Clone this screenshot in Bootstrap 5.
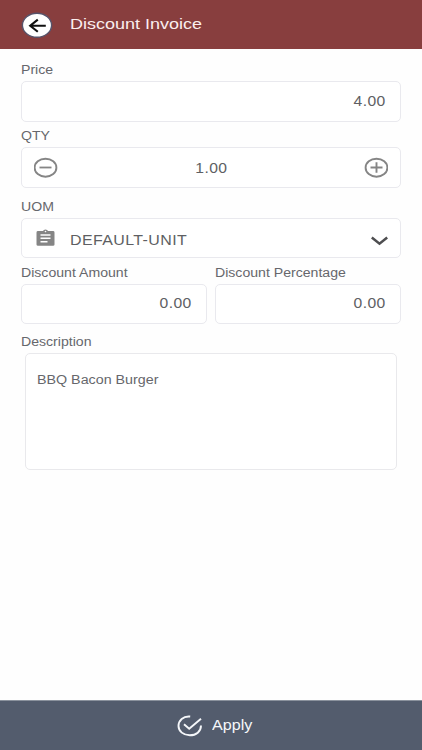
<!DOCTYPE html>
<html lang="en">
<head>
<meta charset="utf-8">
<meta name="viewport" content="width=device-width, initial-scale=1">
<title>Discount Invoice</title>
<link href="https://cdn.jsdelivr.net/npm/bootstrap@5.3.0/dist/css/bootstrap.min.css" rel="stylesheet">
<style>
body{font-family:"Liberation Sans",Arial,sans-serif;background:#fefefe;color:#66676c;font-size:12px;line-height:14px;height:750px;overflow:hidden}
.topbar{height:49px;background:#883e3e;color:#fbeeee;padding-left:21px}
.topbar .title{font-size:15.5px;line-height:20px;margin:0 0 1px 17px;--sx:1.16}
.wide{display:inline-block;white-space:nowrap;transform:scaleX(var(--sx,1.175));transform-origin:left center}
.wide-end{transform-origin:right center}
.wide-mid{transform-origin:center}
.form-area{padding:14px 21px 0}
.cap-label{display:block;height:18px}
.field{height:41px;border:1px solid #e9e9ee;border-radius:5px;background:#fff;font-size:14px;letter-spacing:.35px;line-height:18px;color:#5e5f63;--sx:1.12}
.field.low{height:40px}
.field-num{padding:0 14px 2px}
.note{height:117px;margin:0 4px;border:1px solid #e9e9ec;border-radius:5px;background:#fff;padding:19px 11px;--sx:1.19}
.gap-qty{margin-top:7px}
.gap-uom{margin-top:12px}
.gap-disc{margin-top:8px}
.gap-desc{margin-top:11px}
.pair{display:grid;grid-template-columns:186px 186px;column-gap:8px}
.unit-icon{margin-left:14px}
.unit-text{margin:3px 0 0 15px;--sx:1.14}
.unit-arrow{margin:6px 12px 0 auto}
.footbar{height:50px;background:#535c6d;color:#f5f7fa;font-size:14px;line-height:18px;border:0;border-radius:0;border-top:1px solid #8b929d;padding:0 0 0 177px;--sx:1.15}
.footbar .wide{margin:0 0 1px 9px}
svg{display:block;flex:none}
</style>
<script src="https://cdn.jsdelivr.net/npm/bootstrap@5.3.0/dist/js/bootstrap.bundle.min.js"></script>
</head>
<body class="d-flex flex-column m-0">
<header class="topbar d-flex align-items-center">
  <svg width="32" height="28" viewBox="0 0 32 28" aria-label="Back"><ellipse cx="16" cy="14.200" rx="14.600" ry="12" fill="#fff" stroke="#56536a" stroke-width="1.400"/><path d="M24.800 14.700H9.500M16.800 8.600L9.200 14.700l7.600 6.100" fill="none" stroke="#111" stroke-width="2.100"/></svg>
  <h1 class="title wide fw-normal">Discount Invoice</h1>
</header>
<main class="form-area flex-grow-1">
  <section>
    <label class="cap-label"><span class="wide">Price</span></label>
    <div class="field field-num d-flex align-items-center justify-content-end"><span class="wide wide-end">4.00</span></div>
  </section>
  <section class="gap-qty">
    <label class="cap-label"><span class="wide">QTY</span></label>
    <div class="field d-flex align-items-center justify-content-between px-2">
      <svg class="ms-1" width="24" height="21" viewBox="0 0 24 21"><ellipse cx="11.500" cy="10.700" rx="10.900" ry="9" fill="none" stroke="#858585" stroke-width="1.900"/><path d="M5.500 10.500h12" stroke="#858585" stroke-width="1.800"/></svg>
      <span class="wide wide-mid">1.00</span>
      <svg class="me-1" width="24" height="21" viewBox="0 0 24 21"><ellipse cx="12.500" cy="10.700" rx="10.900" ry="9" fill="none" stroke="#858585" stroke-width="1.900"/><path d="M6.500 10.500h12M12.500 5.300v10.400" stroke="#858585" stroke-width="1.900"/></svg>
    </div>
  </section>
  <section class="gap-uom">
    <label class="cap-label"><span class="wide">UOM</span></label>
    <div class="field low d-flex align-items-center">
      <svg class="unit-icon" width="19" height="18" viewBox="0 0 19 18"><path fill="#858585" fill-rule="evenodd" d="M2 2h5a2.600 2.100 0 0 1 5 0h5q1.500 0 1.500 1.400v12q0 1.400-1.500 1.400H2Q.5 16.800 .5 15.400v-12Q.5 2 2 2zM9.500 1.700a.8.7 0 1 0 .01 0zM4.500 5.300v1.500h10V5.300zM4.500 8.600v1.500h10V8.600zM4.500 11.900v1.500h7v-1.500z"/></svg>
      <span class="wide unit-text">DEFAULT-UNIT</span>
      <svg class="unit-arrow" width="17" height="10" viewBox="0 0 17 10"><path d="M.8 1.500L8.500 7.700l7.700-6.200" fill="none" stroke="#4e4e50" stroke-width="2.500"/></svg>
    </div>
  </section>
  <section class="gap-disc pair">
    <div>
      <label class="cap-label"><span class="wide">Discount Amount</span></label>
      <div class="field low field-num d-flex align-items-center justify-content-end"><span class="wide wide-end">0.00</span></div>
    </div>
    <div>
      <label class="cap-label"><span class="wide">Discount Percentage</span></label>
      <div class="field low field-num d-flex align-items-center justify-content-end"><span class="wide wide-end">0.00</span></div>
    </div>
  </section>
  <section class="gap-desc">
    <label class="cap-label"><span class="wide">Description</span></label>
    <div class="note"><span class="wide">BBQ Bacon Burger</span></div>
  </section>
</main>
<button type="button" class="footbar w-100 d-flex align-items-center">
  <svg width="26" height="22" viewBox="0 0 26 22"><path d="M13.200 1.500C6 .8 1.500 5.500 1.500 11c0 5.300 5 9.300 11.300 9.300S24 16.500 24 10.500M7 9.200l5.200 4.600L24 3.800" fill="none" stroke="#f5f7fa" stroke-width="1.900"/></svg>
  <span class="wide">Apply</span>
</button>
</body>
</html>
